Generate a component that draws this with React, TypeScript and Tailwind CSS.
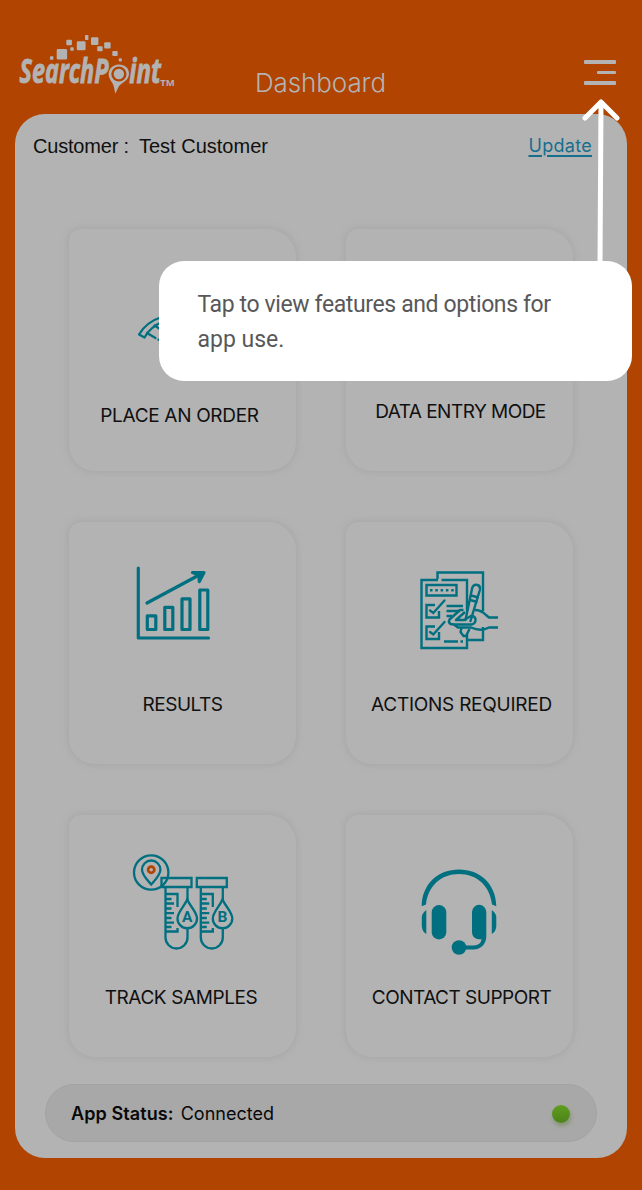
import type { ReactNode } from 'react';

const TEAL = '#006f80';

function Logo() {
  return (
    <svg className="h-[70px] w-[165px]" viewBox="15 30 165 70" fill="#b3b3b3">
      <rect x="50" y="56.3" width="3.4" height="3.4" rx="0.7" />
      <rect x="56.7" y="49" width="10.4" height="10.6" rx="1.4" />
      <rect x="66.3" y="39.8" width="5.6" height="5.4" rx="1" />
      <rect x="70.3" y="47.3" width="3.4" height="3.4" rx="0.7" />
      <rect x="76.8" y="41.3" width="8.8" height="9" rx="1.3" />
      <rect x="85" y="35" width="3.4" height="5" rx="0.7" />
      <rect x="91" y="37.2" width="7.4" height="7.8" rx="1.2" />
      <rect x="97.2" y="46.2" width="5.4" height="5" rx="0.9" />
      <rect x="104.2" y="42.2" width="6.4" height="6.4" rx="1" />
      <rect x="112.3" y="51" width="5.4" height="5" rx="1" />
      <rect x="118.7" y="58.3" width="3.2" height="3.2" rx="1.2" />
      <g stroke="#b3b3b3" strokeWidth="0.9">
        <text transform="translate(19.5 83.4) scale(0.645 1)" textLength="138" lengthAdjust="spacingAndGlyphs" className="font-['Open_Sans'] text-[34.500px] font-bold italic">SearchP</text>
        <text transform="translate(129.300 83.400) scale(0.645 1)" textLength="49" lengthAdjust="spacingAndGlyphs" className="font-['Open_Sans'] text-[34px] font-bold italic">int</text>
      </g>
      <path fillRule="evenodd" d="M119 64.500C112.500 64.500 107.800 69.500 108.800 76C109.600 80 112.800 82.500 113.700 86L115.300 93.800L118.500 87C120.500 83 128.500 81.500 129 74C129.200 68 124.500 64.500 119 64.500Z" />
      <circle cx="118.900" cy="74" r="7.600" fill="#b04400" />
      <circle cx="118.900" cy="74" r="5.200" />
      <text x="160.300" y="86" textLength="14.500" lengthAdjust="spacingAndGlyphs" className="font-['Open_Sans'] text-[9px] font-bold">TM</text>
    </svg>
  );
}

function OrderIcon() {
  return (
    <svg className="h-[170px] w-[227px] shrink-0" viewBox="69 229 227 170" fill="none" stroke={TEAL} strokeWidth="2.200" strokeLinecap="round" strokeLinejoin="round">
      <path d="M163 316.500Q146 322 139 334.500L144.500 337.500Q150 327 163 321.500" />
      <path d="M147 333L155.500 338M154.500 325.500L163 331M158.500 339.500V340" />
    </svg>
  );
}

function ResultsIcon() {
  return (
    <svg className="h-[170px] w-[227px] shrink-0" viewBox="69 522 227 170" fill="none" stroke={TEAL} strokeWidth="3.200" strokeLinecap="round" strokeLinejoin="round">
      <path d="M138.300 568V638H208.500M147 603L201 574" />
      <path d="M192.500 572.500L204 572.500L199.300 581.500L199 575Z" fill={TEAL} />
      <path d="M147.300 615.800h8.500v13.700h-8.500zM164.800 607.300h8v22.200h-8zM182 598.800h8v30.700h-8zM199.800 590h8v39.500h-8z" />
    </svg>
  );
}

function ActionsIcon() {
  return (
    <svg className="h-[170px] w-[227px] shrink-0" viewBox="346 522 227 170" fill="none" stroke={TEAL} strokeWidth="2.400">
      <path d="M437.500 579V572.500H483V611M483 627V640H468" />
      <path d="M438 580H421.500V648H467V634M441.500 580H467V611" />
      <path d="M426.500 585H456.500V595.500H426.500Z" />
      <path d="M430 590.200H454" strokeDasharray="2.500 2.800" />
      <path d="M435 605H426.500V617.500H439V611M435 626.500H426.500V639H439V632" />
      <path d="M430 610.500L433.300 613L444.500 600.500M430 632L433.300 634.500L444.500 622" strokeLinecap="round" />
      <path d="M446.500 606H463M446.500 611H460M446.500 616H452M444 641.500H458M460.500 641.500H463" />
      <path d="M465.500 620L472.300 587.500Q474 584 477.500 585Q480.500 586 480 589.500L470.500 621" strokeLinecap="round" />
      <path d="M471 595.500L478.500 597.500M470 600L477.500 602" />
      <path d="M463.500 610H460L449.500 619.500Q448 622 450.500 624L454 624.500H472Q476 623 475.500 619Q475 616 471 616L464 620H456L465 612" strokeLinejoin="round" />
      <path d="M475 610Q481 610 486 615L489 617.500H498M454 624.500L458 627.500H471Q481 632 489 627.500H498" />
      <path d="M461.500 628L460.500 632L463.500 636H466L469.500 629" />
    </svg>
  );
}

function Tube({ x, letter }: { x: number; letter: string }) {
  return (
    <g transform={`translate(${x} 0)`}>
      <path d="M161.500 878H191.500V887H161.500Z" />
      <path d="M165.500 887V937.500A10.900 10.900 0 0 0 187.500 937.500V928M187.500 887V900" />
      <path d="M166 894H177.500V907M177.500 928V931.500H166M166 899H171.500M166 903.500H174M166 908.500H171.500M166 913.200H174M166 918H171.500M166 922.700H174M166 927H171.500" />
      <path d="M187.200 899.500C184 907 177.500 912 177.500 918.500A9.700 9.700 0 0 0 197 918.500C197 912 190.500 907 187.200 899.500Z" />
      <text x="187.200" y="921.500" textAnchor="middle" fill={TEAL} stroke="none" className="font-['Roboto'] text-[15.500px] font-bold">{letter}</text>
    </g>
  );
}

function SamplesIcon() {
  return (
    <svg className="h-[170px] w-[227px] shrink-0" viewBox="69 815 227 170" fill="none" stroke={TEAL} strokeWidth="2.300">
      <circle cx="151.200" cy="872.500" r="17.200" />
      <path d="M151.200 884.500C147.500 880 142 875 142 869.700A9.200 9.200 0 0 1 160.400 869.700C160.400 875 155 880 151.200 884.500Z" />
      <circle cx="151.200" cy="869.700" r="3.100" stroke="#b04400" strokeWidth="2.700" />
      <Tube x={0} letter="A" />
      <Tube x={35.300} letter="B" />
    </svg>
  );
}

function SupportIcon() {
  return (
    <svg className="h-[170px] w-[227px] shrink-0" viewBox="346 815 227 170" fill={TEAL}>
      <path d="M421.700 906.300C422 884 438 869.500 459 869.500S496 884 496.300 906.300L492 904.500C490 886 477 874 459 874S428 886 426 904.500Z" />
      <rect x="431.700" y="905" width="14.600" height="34.500" rx="7.300" />
      <path d="M472 912A7.100 7.100 0 0 1 486.300 912V936C486.300 944 481 949.500 473.500 949.500H465V945.500H473.500Q481 945 481.500 939.300H479A7 7 0 0 1 472 932Z" />
      <path d="M426.300 910V934Q421.800 931 421.800 926V918Q421.800 913 426.300 910ZM491.800 910V934Q496.300 931 496.300 926V918Q496.300 913 491.800 910Z" />
      <circle cx="459" cy="947.500" r="7.300" />
    </svg>
  );
}

function Tile({ icon, label, className }: { icon: ReactNode; label: string; className: string }) {
  return (
    <div className="flex h-[241.500px] flex-col items-center rounded-tl-[12px] rounded-tr-[28px] rounded-br-[28px] rounded-bl-[26px] bg-[#b3b3b3] shadow-[0_0_7px_1px_#a6a6a6]">
      {icon}
      <span className={`font-['Inter'] text-[19px] leading-6 whitespace-nowrap text-[#101010] ${className}`}>{label}</span>
    </div>
  );
}

export default function App() {
  return (
    <div className="relative flex h-[1190px] w-[642px] flex-col bg-[#b04400] px-[15px] font-['Inter',sans-serif]">
      <header className="flex h-[114px] shrink-0 items-start">
        <div className="w-[240px] pt-[30px]"><Logo /></div>
        <h1 className="w-[329px] pt-[66px] font-['Inter'] text-[26px] leading-[34px] font-[350] tracking-[-0.100px] text-[#b3b3b3]">Dashboard</h1>
        <div className="flex w-8 flex-col items-end gap-[7px] pt-[60px]">
          <span className="h-[3.500px] w-8 rounded-[1px] bg-[#b3b3b3]" />
          <span className="h-[3.500px] w-[19px] rounded-[1px] bg-[#b3b3b3]" />
          <span className="h-[3.500px] w-8 rounded-[1px] bg-[#b3b3b3]" />
        </div>
      </header>

      <main className="flex h-[1044px] w-[612px] shrink-0 flex-col rounded-[30px] bg-[#b3b3b3]">
        <div className="flex h-[115px] items-start pt-5 pr-[35px] pl-[18px] font-['Liberation_Sans'] text-[20px] leading-6 text-[#101010]">
          <span className="w-[106px] tracking-[-0.200px]">Customer :</span>
          <span>Test Customer</span>
          <a className="ml-auto font-['Inter'] text-[18px] tracking-[0.300px] text-[#176f8f] underline decoration-[1.500px] underline-offset-[3px]">Update</a>
        </div>
        <div className="grid grid-cols-[227px_227px] gap-x-[50px] gap-y-[51.500px] pl-[54px]">
          <Tile icon={<OrderIcon />} label="PLACE AN ORDER" className="mt-[5px] mr-[6px] tracking-[-0.320px]" />
          <Tile icon={<span className="h-[170px] shrink-0" />} label="DATA ENTRY MODE" className="mt-px ml-[2px] tracking-[-0.530px]" />
          <Tile icon={<ResultsIcon />} label="RESULTS" className="mt-px tracking-[-0.450px]" />
          <Tile icon={<ActionsIcon />} label="ACTIONS REQUIRED" className="mt-px ml-1 tracking-[-0.250px]" />
          <Tile icon={<SamplesIcon />} label="TRACK SAMPLES" className="mt-px mr-[3px] tracking-[-0.400px]" />
          <Tile icon={<SupportIcon />} label="CONTACT SUPPORT" className="mt-px ml-1 tracking-[-0.500px]" />
        </div>
        <div className="mt-[27px] ml-[30px] flex h-[58px] w-[552px] items-center rounded-full border border-[#a3a3a3] bg-[#a8a8a8] px-[25px] text-[18px] text-[#080808]">
          <span className="mt-0.5 font-semibold tracking-[0.100px]">App Status:</span>
          <span className="mt-0.5 ml-[7px]">Connected</span>
          <span className="mt-0.5 mr-px ml-auto h-[18px] w-[18px] rounded-full bg-linear-to-b from-[#5f9e1d] to-[#4c8219] shadow-[1px_3px_4px_#829471]" />
        </div>
      </main>

      <svg className="absolute top-[95px] left-[575px] h-[170px] w-[50px]" viewBox="575 95 50 170" fill="none" stroke="#fff" strokeLinecap="round" strokeLinejoin="round" strokeWidth="5">
        <path d="M600 265L601 102M585 118L601 102L617 118" />
      </svg>
      <div className="absolute top-[261px] left-[159px] h-[120px] w-[473px] rounded-[25px] bg-white pt-[26px] pl-[38.500px] font-['Roboto'] text-[23px] leading-[35px] tracking-[-0.380px] text-[#58585a]">
        <p className="whitespace-nowrap">Tap to view features and options for<br /><span className="tracking-normal">app use.</span></p>
      </div>
    </div>
  );
}
